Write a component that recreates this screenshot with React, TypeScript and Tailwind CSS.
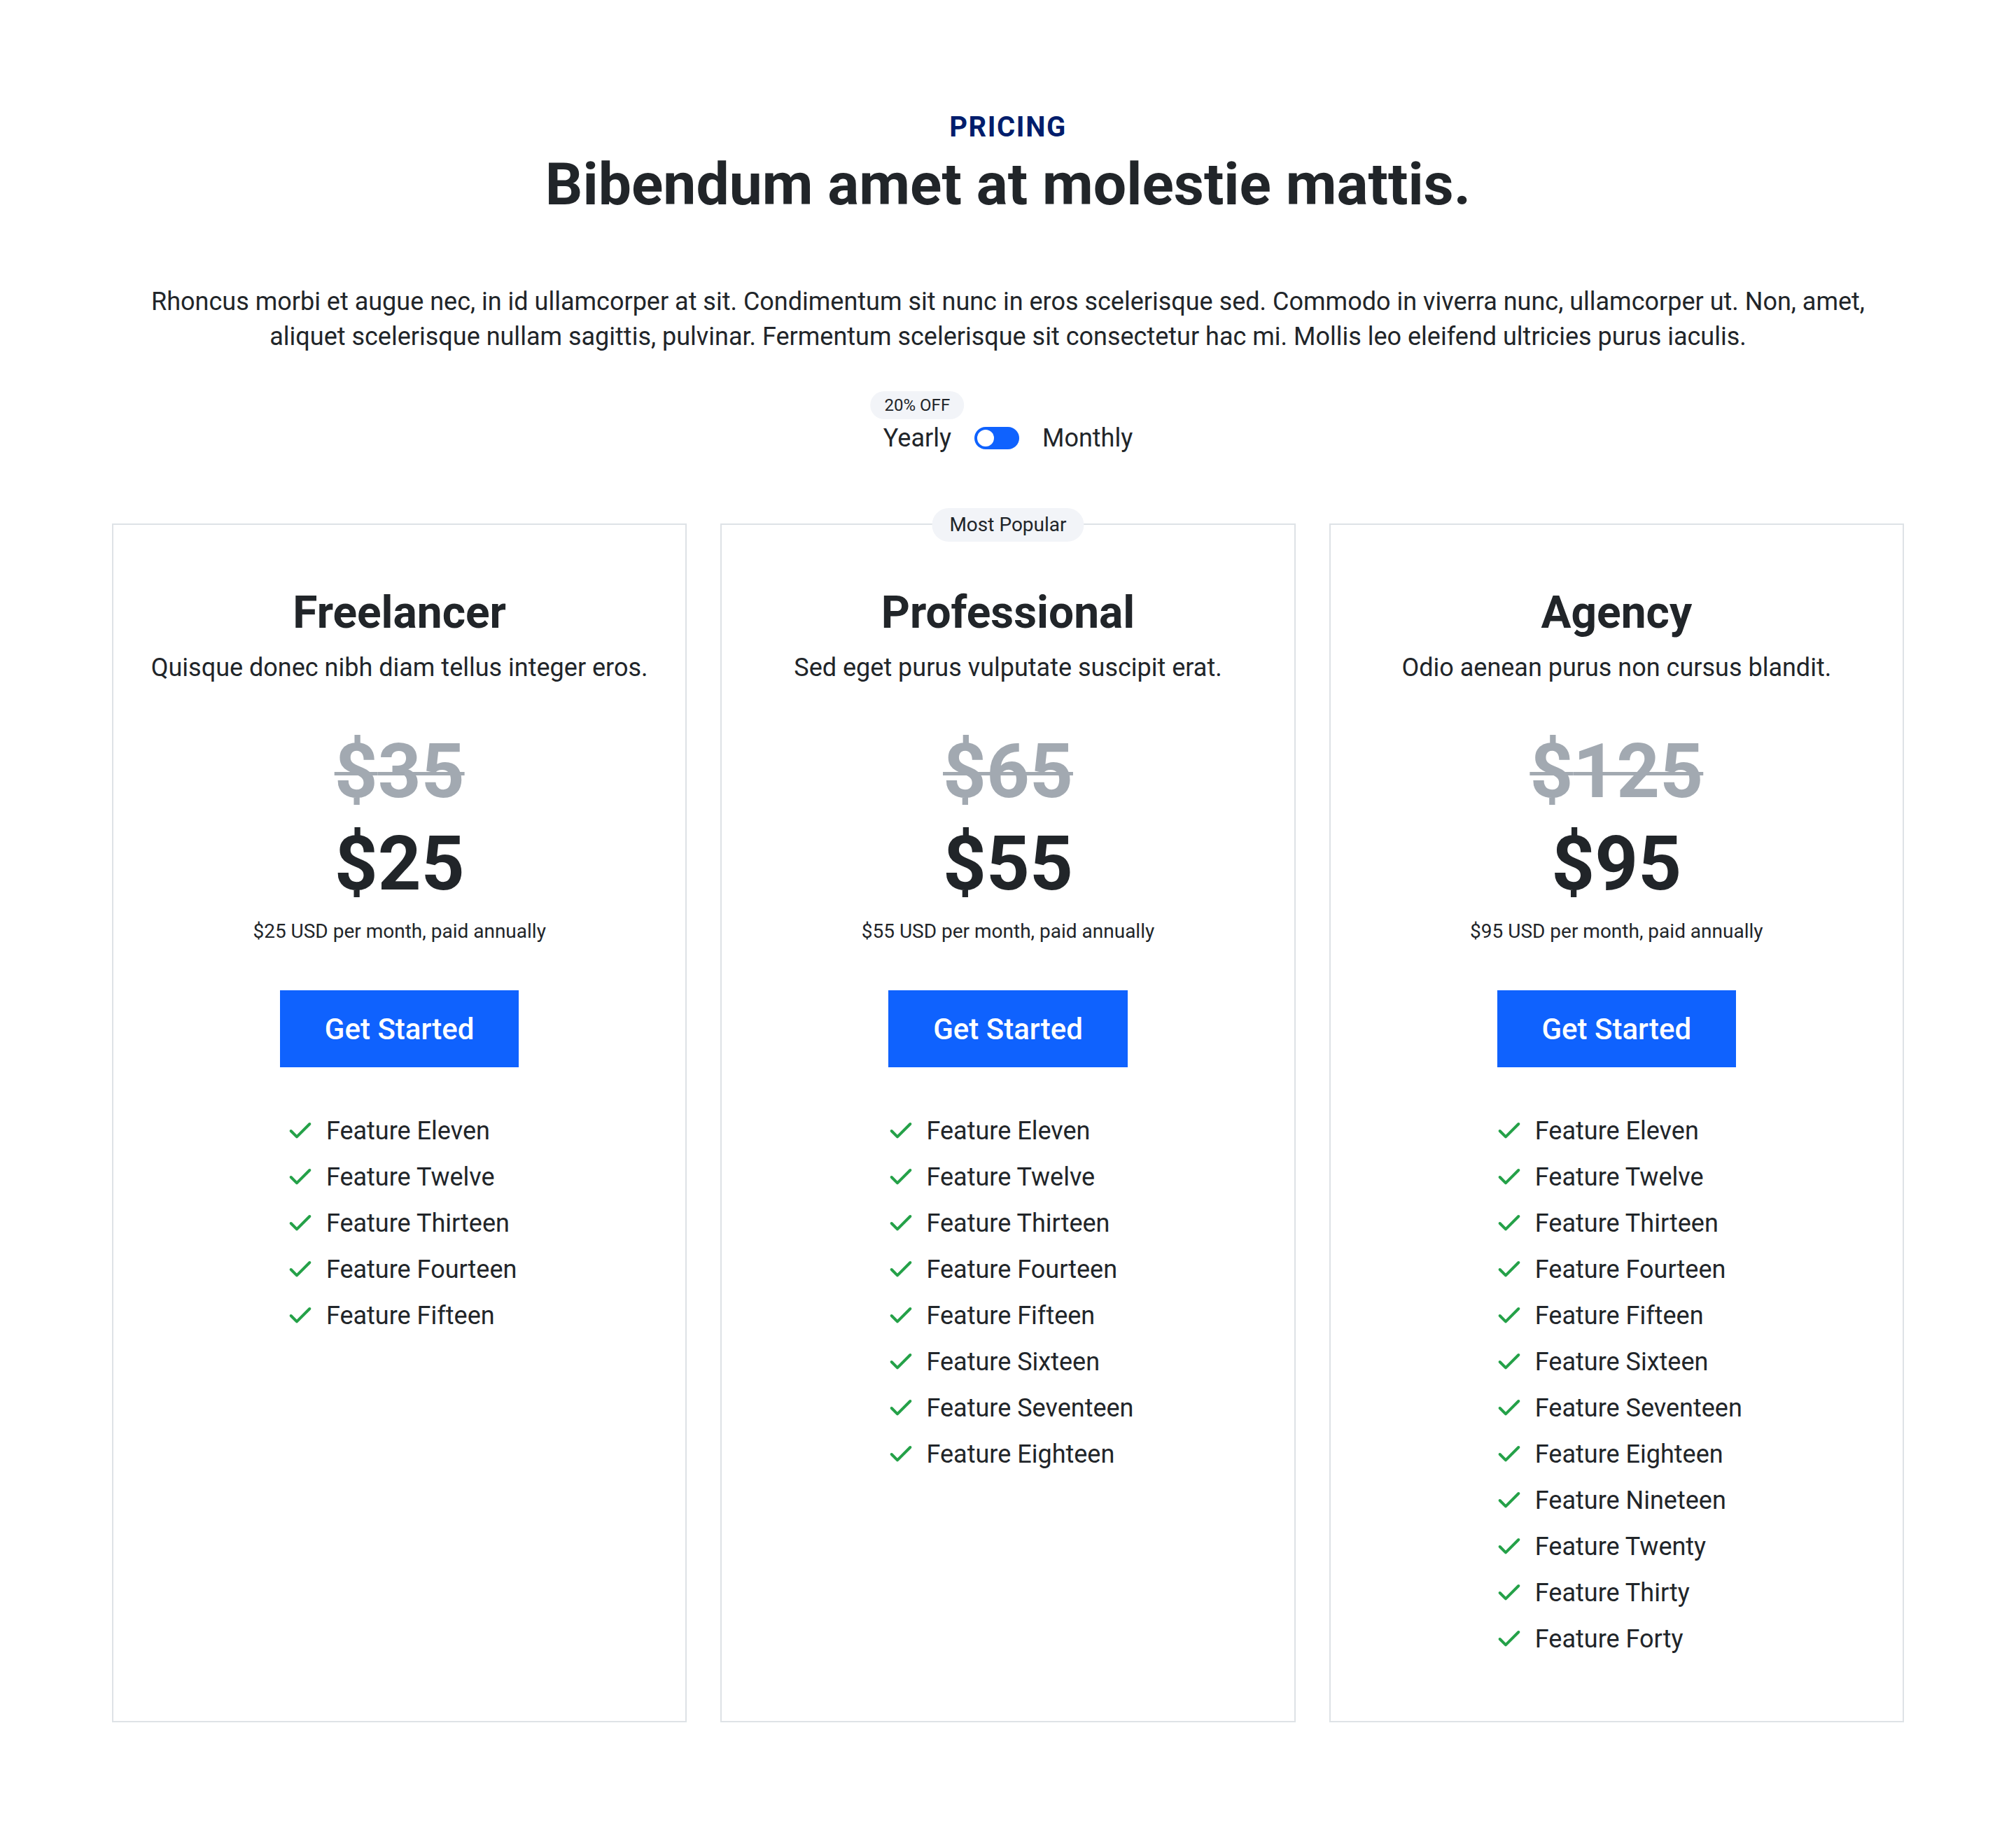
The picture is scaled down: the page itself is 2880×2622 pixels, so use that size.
import { Check } from "lucide-react";

type Plan = {
  name: string;
  blurb: string;
  oldPrice: number;
  price: number;
  features: string[];
  popular?: boolean;
};

const base = ["Eleven", "Twelve", "Thirteen", "Fourteen", "Fifteen"];

const plans: Plan[] = [
  {
    name: "Freelancer",
    blurb: "Quisque donec nibh diam tellus integer eros.",
    oldPrice: 35,
    price: 25,
    features: base,
  },
  {
    name: "Professional",
    blurb: "Sed eget purus vulputate suscipit erat.",
    oldPrice: 65,
    price: 55,
    features: [...base, "Sixteen", "Seventeen", "Eighteen"],
    popular: true,
  },
  {
    name: "Agency",
    blurb: "Odio aenean purus non cursus blandit.",
    oldPrice: 125,
    price: 95,
    features: [...base, "Sixteen", "Seventeen", "Eighteen", "Nineteen", "Twenty", "Thirty", "Forty"],
  },
];

function PlanCard({ plan }: { plan: Plan }) {
  return (
    <div className="relative flex flex-col items-center border-2 border-[#dee2e6] bg-white px-10 pt-[86px] pb-[84px] text-center">
      {plan.popular && (
        <span className="absolute top-0 left-1/2 flex h-[48px] -translate-x-1/2 -translate-y-1/2 items-center rounded-full bg-[#f2f4f8] px-[25px] text-[28px] text-[#212529]">
          Most Popular
        </span>
      )}
      <h3 className="text-[64px] leading-[80px] font-bold text-[#212529]">{plan.name}</h3>
      <p className="mt-[11px] text-[36px] leading-[54px] text-[#212529]">{plan.blurb}</p>
      <div className="mt-[55px] text-[108px] leading-[132px] font-bold text-[#a2a9b1] line-through decoration-[length:5px]">
        ${plan.oldPrice}
      </div>
      <div className="text-[108px] leading-[132px] font-bold text-[#212529]">${plan.price}</div>
      <p className="mt-[10px] text-[28px] leading-[42px] text-[#212529]">
        ${plan.price} USD per month, paid annually
      </p>
      <button className="mt-[63px] h-[110px] bg-[#0f62fe] px-[64px] text-[42px] font-medium text-white">
        Get Started
      </button>
      <ul className="mt-[58px] flex w-fit flex-col pl-[6px]">
        {plan.features.map((f) => (
          <li key={f} className="flex h-[66px] items-center gap-[17px] text-[36px] text-[#212529]">
            <Check size={40} strokeWidth={2.4} className="text-[#24a148]" />
            <span>Feature {f}</span>
          </li>
        ))}
      </ul>
    </div>
  );
}

export default function App() {
  return (
    <div className="min-h-screen bg-white px-[160px] pt-[158px] pb-[161px] font-['Roboto',sans-serif] text-[#212529]">
      <div className="flex flex-col items-center text-center">
        <p className="text-[40px] leading-[48px] font-bold tracking-[0.04em] text-[#001d6c]">PRICING</p>
        <h1 className="mt-[8px] text-[84px] leading-[100px] font-bold">Bibendum amet at molestie mattis.</h1>
        <p className="mx-auto mt-[92px] max-w-[2520px] text-[36px] leading-[50px]">
          Rhoncus morbi et augue nec, in id ullamcorper at sit. Condimentum sit nunc in eros scelerisque sed. Commodo in
          viverra nunc, ullamcorper ut. Non, amet, aliquet scelerisque nullam sagittis, pulvinar. Fermentum scelerisque
          sit consectetur hac mi. Mollis leo eleifend ultricies purus iaculis.
        </p>

        <div className="mt-[96px] flex items-center gap-[33px] text-[36px] leading-[48px]">
          <span className="relative">
            <span className="absolute -top-[43px] left-1/2 flex h-[40px] -translate-x-1/2 items-center rounded-full bg-[#f2f4f8] px-[20px] text-[24px] whitespace-nowrap">
              20% OFF
            </span>
            Yearly
          </span>
          <button className="flex h-[32px] w-[64px] items-center rounded-full bg-[#0f62fe] px-[4px]">
            <span className="h-[24px] w-[24px] rounded-full bg-white" />
          </button>
          <span>Monthly</span>
        </div>
      </div>

      <div className="mt-[98px] grid grid-cols-3 gap-[48px]">
        {plans.map((p) => (
          <PlanCard key={p.name} plan={p} />
        ))}
      </div>
    </div>
  );
}
